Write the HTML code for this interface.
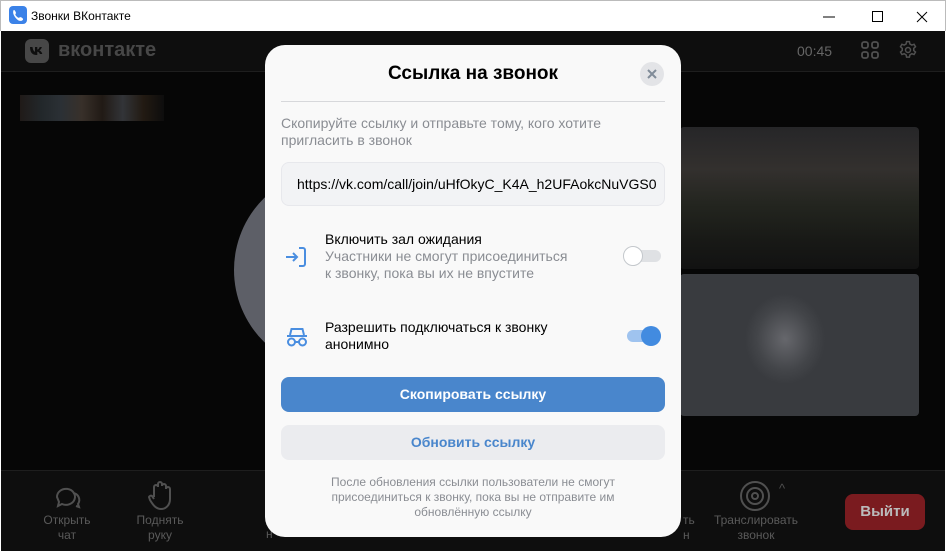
<!DOCTYPE html>
<html><head><meta charset="utf-8"><style>
*{margin:0;padding:0;box-sizing:border-box}
body{width:946px;height:552px;overflow:hidden;background:#fff;font-family:"Liberation Sans","Noto Sans CJK SC",sans-serif;position:relative}
.title{position:absolute;left:0;top:0;width:946px;height:31px;background:#fff;border:1px solid #bbb;border-bottom:none}
.title .t{position:absolute;left:30px;top:8px;font-size:12px;color:#000}
.app{position:absolute;left:1px;top:31px;width:944px;height:520px;background:#060606}
.hdr{position:absolute;left:0;top:0;width:944px;height:41px;background:#0e0e0e;border-bottom:1px solid #1e1e1e}
.bot{position:absolute;left:0;top:439px;width:944px;height:81px;background:#0e0e0e;border-top:1px solid #1e1e1e}
.lbl{position:absolute;color:#5a5a5a;font-size:12px;text-align:center;line-height:15px}
.modal{position:absolute;left:265px;top:45px;width:416px;height:492px;background:#f9f9f9;border-radius:20px}
.modal .h{position:absolute;top:18px;width:100%;text-align:center;font-size:19px;font-weight:bold;color:#000}
.gray{color:#8a8d93}
</style></head><body>
<div class="title">
<svg style="position:absolute;left:8px;top:5px" width="18" height="18" viewBox="0 0 18 18"><rect width="18" height="18" rx="4" fill="#3b82e8"/><path d="M5 4c1 0 2 2.5 2 3s-1 1-0.5 2 2 2.5 3 2.7 1-0.7 2-0.6 3 1.5 2.5 2.5-2 1.5-3.5 1.2S5 11 4.2 7.2C4 5 4.5 4 5 4z" fill="#fff"/></svg>
<div class="t">Звонки ВКонтакте</div>
<svg style="position:absolute;left:822px;top:10px" width="110" height="12"><path d="M0 6h12" stroke="#000"/><rect x="49.5" y="0.5" width="10" height="10" fill="none" stroke="#000"/><path d="M94 1l10 10M104 1l-10 10" stroke="#000"/></svg>
</div>
<div class="app">
<div class="hdr">
<svg style="position:absolute;left:24px;top:8px" width="24" height="24"><rect width="24" height="24" rx="6" fill="#474747"/><path d="M5 8h2.5c.3 3 1.5 4.5 2.5 4.7V8h2.3v2.6c1-.1 2-1.4 2.4-2.6h2.2c-.4 1.6-1.6 2.9-2.5 3.4 1 .4 2.4 1.6 2.9 3.6h-2.4c-.4-1.3-1.5-2.3-2.6-2.4V16h-.3C6.6 16 5.2 13 5 8z" fill="#0e0e0e"/></svg>
<div style="position:absolute;left:57px;top:8px;font-size:20px;font-weight:bold;color:#474747">вконтакте</div>
<div style="position:absolute;left:796px;top:12px;font-size:14px;color:#666">00:45</div>
<svg style="position:absolute;left:860px;top:10px" width="18" height="18" fill="none" stroke="#505050" stroke-width="1.8"><rect x="1" y="1" width="6" height="6" rx="2"/><rect x="11" y="1" width="6" height="6" rx="2"/><rect x="1" y="11" width="6" height="6" rx="2"/><rect x="11" y="11" width="6" height="6" rx="2"/></svg>
<svg style="position:absolute;left:897px;top:9px" width="20" height="20" viewBox="0 0 24 24" fill="none" stroke="#505050" stroke-width="1.8"><circle cx="12" cy="12" r="3"/><path d="M10.3 2h3.4l.6 2.8 2.3 1.3 2.7-.9 1.7 2.9-2.1 1.9v2.6l2.1 1.9-1.7 2.9-2.7-.9-2.3 1.3-.6 2.8h-3.4l-.6-2.8-2.3-1.3-2.7.9-1.7-2.9 2.1-1.9v-2.6L3 8.1l1.7-2.9 2.7.9 2.3-1.3z"/></svg>
</div>
<div style="position:absolute;left:19px;top:64px;width:144px;height:26px;background:linear-gradient(90deg,#201a18,#22272a,#2b3035,#38302a,#211a15,#323438,#221a12,#0d0d0d)"></div>
<div style="position:absolute;left:233px;top:138px;width:202px;height:202px;border-radius:50%;background:#5d5f67"></div>
<div style="position:absolute;left:679px;top:96px;width:239px;height:142px;border-radius:4px;background:linear-gradient(180deg,#262628,#33302e 30%,#23251f 55%,#181916 80%,#121212)"></div>
<div style="position:absolute;left:679px;top:243px;width:239px;height:142px;border-radius:4px;background:radial-gradient(ellipse 40px 45px at 105px 65px,#66676c,#434549 70%,#393b3f)"></div>
<div class="bot">
<svg style="position:absolute;left:52px;top:12px" width="30" height="30" fill="none" stroke="#505050" stroke-width="2"><path d="M4 14a9 8 0 1 1 5 7l-4 2 1-4z"/><path d="M20 10a7 7 0 0 1 5 11l1 3-3-1"/></svg>
<div class="lbl" style="left:36px;top:42px;width:60px">Открыть<br>чат</div>
<svg style="position:absolute;left:146px;top:8px" width="28" height="32" fill="none" stroke="#505050" stroke-width="2"><path d="M7 18V8a2 2 0 0 1 4 0v-3a2 2 0 0 1 4 0v2a2 2 0 0 1 4 0v3a2 2 0 0 1 4 0v10c0 6-4 10-9 10s-8-4-11-9l-1-3a2 2 0 0 1 3-1l2 3"/></svg>
<div class="lbl" style="left:129px;top:42px;width:60px">Поднять<br>руку</div>
<svg style="position:absolute;left:738px;top:9px" width="32" height="32" fill="none" stroke="#505050" stroke-width="2"><circle cx="16" cy="16" r="14"/><circle cx="16" cy="16" r="8"/><circle cx="16" cy="16" r="3"/></svg>
<div style="position:absolute;left:778px;top:10px;color:#505050;font-size:13px">^</div>
<div class="lbl" style="left:700px;top:42px;width:110px">Транслировать<br>звонок</div>
<div class="lbl" style="left:682px;top:42px;width:14px;text-align:left">ть<br>н</div>
<div class="lbl" style="left:265px;top:56px">н</div>
<div style="position:absolute;left:844px;top:23px;width:80px;height:36px;border-radius:8px;background:#7a1b1f;color:#bbb;font-weight:bold;font-size:15px;text-align:center;line-height:36px">Выйти</div>
</div>
</div>
<div class="modal">
<div class="h">Ссылка на звонок</div>
<div style="position:absolute;left:375px;top:17px;width:24px;height:24px;border-radius:50%;background:#e3e4e7"></div>
<svg style="position:absolute;left:381px;top:23px" width="12" height="12"><path d="M2 2l8 8M10 2l-8 8" stroke="#818c99" stroke-width="2"/></svg>
<div style="position:absolute;left:16px;top:56px;width:384px;height:1px;background:#d7d8db"></div>
<div class="gray" style="position:absolute;left:16px;top:70px;font-size:14px;line-height:17px">Скопируйте ссылку и отправьте тому, кого хотите<br>пригласить в звонок</div>
<div style="position:absolute;left:16px;top:117px;width:384px;height:44px;border-radius:8px;background:#f2f3f5;border:1px solid #e7e8ec;overflow:hidden;white-space:nowrap;font-size:14px;color:#000;line-height:42px;padding-left:15px">https://vk.com/call/join/uHfOkyC_K4A_h2UFAokcNuVGS0</div>
<svg style="position:absolute;left:20px;top:200px" width="24" height="24" fill="none" stroke="#4a8ee0" stroke-width="2"><path d="M1 12h11M8 8l4 4-4 4M14 3h4a2 2 0 0 1 2 2v14a2 2 0 0 1-2 2h-4"/></svg>
<div style="position:absolute;left:60px;top:186px;font-size:14px;line-height:17px;color:#000">Включить зал ожидания<br><span class="gray">Участники не смогут присоединиться<br>к звонку, пока вы их не впустите</span></div>
<div style="position:absolute;left:360px;top:205px;width:36px;height:12px;border-radius:6px;background:#dfe1e4"></div>
<div style="position:absolute;left:358px;top:201px;width:20px;height:20px;border-radius:50%;background:#fff;border:1px solid #c4c8cc"></div>
<svg style="position:absolute;left:20px;top:280px" width="24" height="24" fill="none" stroke="#4a8ee0" stroke-width="2"><path d="M5 10l1.5-6h11L19 10M2 11h20"/><circle cx="6.5" cy="17" r="3.5"/><circle cx="17.5" cy="17" r="3.5"/><path d="M10 17h4"/></svg>
<div style="position:absolute;left:60px;top:274px;font-size:14px;line-height:17px;color:#000">Разрешить подключаться к звонку<br>анонимно</div>
<div style="position:absolute;left:362px;top:285px;width:34px;height:12px;border-radius:6px;background:#9fc3ef"></div>
<div style="position:absolute;left:376px;top:281px;width:20px;height:20px;border-radius:50%;background:#428be0"></div>
<div style="position:absolute;left:16px;top:332px;width:384px;height:35px;border-radius:8px;background:#4986cc;color:#fff;font-weight:bold;font-size:14px;text-align:center;line-height:35px">Скопировать ссылку</div>
<div style="position:absolute;left:16px;top:380px;width:384px;height:35px;border-radius:8px;background:#ebecef;color:#4986cc;font-weight:bold;font-size:14px;text-align:center;line-height:35px">Обновить ссылку</div>
<div class="gray" style="position:absolute;left:0;top:430px;width:416px;text-align:center;font-size:12px;line-height:15px">После обновления ссылки пользователи не смогут<br>присоединиться к звонку, пока вы не отправите им<br>обновлённую ссылку</div>
</div>
</body></html>
